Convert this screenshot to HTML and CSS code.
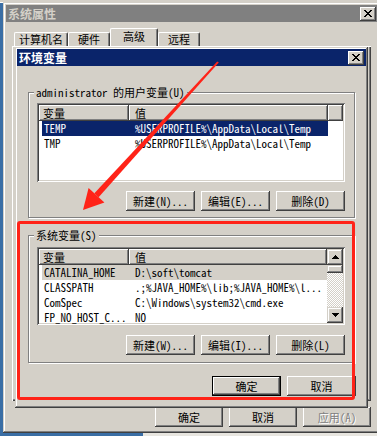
FILE: index.html
```html
<!DOCTYPE html>
<html lang="zh-CN">
<head>
<meta charset="utf-8">
<title>系统属性 - 环境变量</title>
<link rel="stylesheet" href="styles.css">
</head>
<body>
<div class="topstrip"></div>

<div class="outer">
  <div class="title inactive">
    <span class="ttext">系统属性</span>
    <span class="xbtn"><svg width="8" height="7" viewBox="0 0 8 7"><path d="M0 0h2v1h-2z M6 0h2v1h-2z M1 1h2v1h-2z M5 1h2v1h-2z M2 2h4v1h-4z M3 3h2v1h-2z M2 4h4v1h-4z M1 5h2v1h-2z M5 5h2v1h-2z M0 6h2v1h-2z M6 6h2v1h-2z" fill="#000"/></svg></span>
  </div>
  <div class="tabs">
    <div class="tab w1">计算机名</div>
    <div class="tab w2">硬件</div>
    <div class="tab sel w3">高级</div>
    <div class="tab w2">远程</div>
  </div>
  <div class="panel"></div>
  <div class="obtns">
    <div class="btn wo">确定</div>
    <div class="btn wo">取消</div>
    <div class="btn wo dis">应用(A)</div>
  </div>
</div>

<div class="dlg">
  <div class="title active">
    <span class="ttext">环境变量</span>
    <span class="xbtn"><svg width="8" height="7" viewBox="0 0 8 7"><path d="M0 0h2v1h-2z M6 0h2v1h-2z M1 1h2v1h-2z M5 1h2v1h-2z M2 2h4v1h-4z M3 3h2v1h-2z M2 4h4v1h-4z M1 5h2v1h-2z M5 5h2v1h-2z M0 6h2v1h-2z M6 6h2v1h-2z" fill="#000"/></svg></span>
  </div>

  <div class="group g-user">
    <div class="lbl">administrator 的用户变量(U)</div>
    <div class="list l-user">
      <div class="hdr">
        <div class="hc c1">变量</div>
        <div class="hc c2">值</div>
        <div class="hc fill"></div>
      </div>
      <div class="row sel"><div class="cell k">TEMP</div><div class="cell v">%USERPROFILE%\AppData\Local\Temp</div></div>
      <div class="row"><div class="cell k">TMP</div><div class="cell v">%USERPROFILE%\AppData\Local\Temp</div></div>
    </div>
    <div class="gbtns">
      <div class="btn wg">新建(N)...</div>
      <div class="btn wg">编辑(E)...</div>
      <div class="btn wg">删除(D)</div>
    </div>
  </div>

  <div class="group g-sys">
    <div class="lbl">系统变量(S)</div>
    <div class="list l-sys">
      <div class="lmain">
        <div class="hdr">
          <div class="hc c1">变量</div>
          <div class="hc c2 grow">值</div>
        </div>
        <div class="row inact"><div class="cell k">CATALINA_HOME</div><div class="cell v">D:\soft\tomcat</div></div>
        <div class="row"><div class="cell k">CLASSPATH</div><div class="cell v">.;%JAVA_HOME%\lib;%JAVA_HOME%\l...</div></div>
        <div class="row"><div class="cell k">ComSpec</div><div class="cell v">C:\Windows\system32\cmd.exe</div></div>
        <div class="row"><div class="cell k">FP_NO_HOST_C...</div><div class="cell v">NO</div></div>
      </div>
      <div class="sbar">
        <div class="sbtn"><svg width="7" height="4" viewBox="0 0 7 4"><path d="M3 0h1v1h-1z M2 1h3v1h-3z M1 2h5v1h-5z M0 3h7v1h-7z" fill="#000"/></svg></div>
        <div class="thumb"></div>
        <div class="track"></div>
        <div class="sbtn"><svg width="7" height="4" viewBox="0 0 7 4"><path d="M0 0h7v1h-7z M1 1h5v1h-5z M2 2h3v1h-3z M3 3h1v1h-1z" fill="#000"/></svg></div>
      </div>
    </div>
    <div class="gbtns">
      <div class="btn wg">新建(W)...</div>
      <div class="btn wg">编辑(I)...</div>
      <div class="btn wg">删除(L)</div>
    </div>
  </div>

  <div class="dbtns">
    <div class="btn wg def">确定</div>
    <div class="btn wg">取消</div>
  </div>
</div>

<div class="taskstrip"></div>
<div class="redbox"></div>
<svg class="arrow" width="377" height="436" viewBox="0 0 377 436">
  <polygon points="217.2,61.4 218.8,62.6 98.6,197.2 94.4,193.2" fill="#ff2318"/>
  <polygon points="83,210 88.6,188 104.4,202.4" fill="#ff2318"/>
</svg>
</body>
</html>
```
FILE: styles.css
```css
* { box-sizing: border-box; }
html, body { margin: 0; padding: 0; }
body {
  width: 377px; height: 436px; overflow: hidden; position: relative;
  background: #3a6ea5;
  font-family: "Noto Sans Mono CJK SC", "Liberation Mono", "Noto Sans CJK SC", monospace;
  font-size: 11px; color: #000;
}

.topstrip { position: absolute; left: 0; top: 0; width: 377px; height: 3px; background: #d4d0c8; box-shadow: inset 0 -1px #fff; }
.taskstrip { position: absolute; left: 143px; top: 433px; width: 234px; height: 3px; background: #e8e6e0; }

.outer {
  position: absolute; left: 3px; top: 2px; width: 378px; height: 431px;
  background: #d4d0c8; padding: 3px;
  display: flex; flex-direction: column;
  box-shadow: inset -1px -1px #404040, inset 1px 1px #d4d0c8, inset -2px -2px #808080, inset 2px 2px #fff;
}

.title { height: 17px; flex: none; display: flex; align-items: center; padding: 0 2px; font-weight: bold; font-size: 12px; font-family: "Noto Sans CJK SC", sans-serif; }
.title.inactive { background: #808080; color: #d4d0c8; }
.title.active { background: #0a246a; color: #fff; }
.ttext { line-height: 17px; }
.xbtn {
  margin-left: auto; width: 16px; height: 14px; background: #d4d0c8;
  display: flex; align-items: center; justify-content: center;
  box-shadow: inset -1px -1px #404040, inset 1px 1px #fff, inset -2px -2px #808080;
}
.xbtn svg { display: block; }

.tabs { display: flex; align-items: flex-end; height: 19px; margin: 5px 0 0 8px; flex: none; }
.tab {
  height: 14px; border-top: 1px solid #fff; border-left: 1px solid #fff; border-right: 1px solid #404040;
  border-radius: 2px 2px 0 0; box-shadow: inset -1px 0 #808080;
  text-align: center; line-height: 13px; font-size: 11px; font-family: "Noto Sans CJK SC", sans-serif;
}
.tab.sel { height: 18px; line-height: 15px; }
.w1 { width: 54px; }
.w2 { width: 42px; }
.w3 { width: 48px; }

.panel {
  margin-left: 6px; width: 359px; height: 355px; flex: none;
  box-shadow: inset 1px 1px #fff, inset -1px -1px #404040, inset -2px -2px #808080;
}

.obtns { margin: 6px 0 0 6px; width: 359px; display: flex; justify-content: flex-end; gap: 6px; }

.btn {
  height: 20px; background: #d4d0c8; display: flex; align-items: center; justify-content: center;
  box-shadow: inset -1px -1px #404040, inset 1px 1px #fff, inset -2px -2px #808080, inset 2px 2px #d4d0c8;
  font-size: 11px; line-height: 12px;
}
.wo { width: 68px; }
.wg { width: 69px; }
.btn.dis { color: #808080; text-shadow: 1px 1px #fff; }
.btn.def {
  box-shadow: inset 0 0 0 1px #000, inset -2px -2px #404040, inset 2px 2px #fff, inset -3px -3px #808080;
}

.dlg {
  position: absolute; left: 15px; top: 47px; width: 353px; height: 361px;
  background: #d4d0c8; padding: 2px;
  display: flex; flex-direction: column;
  box-shadow: inset -1px -1px #404040, inset 1px 1px #d4d0c8, inset -2px -2px #808080, inset 2px 2px #fff;
}

.group {
  position: relative; margin-left: 11px; width: 327px; flex: none;
  border: 1px solid #808080; box-shadow: inset 1px 1px #fff, 1px 1px #fff;
}
.g-user { margin-top: 26px; padding: 10px 9px 6px 8px; }
.g-sys { margin-top: 17px; padding: 11px 9px 7px 8px; }
.lbl { position: absolute; top: -7px; left: 5px; padding: 0 2px; background: #d4d0c8; line-height: 12px; white-space: nowrap; }

.list {
  background: #fff; padding: 2px;
  box-shadow: inset 1px 1px #808080, inset -1px -1px #fff, inset 2px 2px #404040, inset -2px -2px #d4d0c8;
}
.l-user { height: 79px; display: flex; flex-direction: column; }
.l-sys { height: 78px; display: flex; }
.lmain { flex: 1; display: flex; flex-direction: column; min-width: 0; }

.hdr { display: flex; height: 16px; flex: none; }
.hc {
  background: #d4d0c8; line-height: 16px; white-space: nowrap;
  box-shadow: inset -1px -1px #404040, inset 1px 1px #fff, inset -2px -2px #808080;
}
.hc.c1 { width: 90px; padding-left: 4px; }
.hc.c2 { width: 199px; padding-left: 6px; }
.hc.grow { flex: 1; width: auto; }
.hc.fill { flex: 1; }

.row { display: flex; height: 15px; line-height: 15px; margin-left: 3px; width: 286px; white-space: nowrap; }
.l-sys .row { width: 285px; }
.cell.k { width: 87px; padding-left: 2px; overflow: hidden; }
.cell.v { flex: 1; padding-left: 6px; overflow: hidden; }
.row.sel { background: #0a246a; color: #fff; }
.row.inact { background: #d4d0c8; }

.sbar { width: 16px; flex: none; display: flex; flex-direction: column; }
.sbtn {
  height: 16px; flex: none; background: #d4d0c8; display: flex; align-items: center; justify-content: center;
  box-shadow: inset -1px -1px #404040, inset 1px 1px #d4d0c8, inset -2px -2px #808080, inset 2px 2px #fff;
}
.sbtn svg { display: block; }
.thumb {
  height: 8px; flex: none; background: #d4d0c8;
  box-shadow: inset -1px -1px #404040, inset 1px 1px #d4d0c8, inset -2px -2px #808080, inset 2px 2px #fff;
}
.track { flex: 1; background: repeating-conic-gradient(#d4d0c8 0 25%, #fff 0 50%) 0 0 / 2px 2px; }

.gbtns { display: flex; justify-content: flex-end; gap: 6px; margin-top: 9px; }
.g-sys .gbtns { margin-top: 10px; }

.dbtns { display: flex; justify-content: flex-end; gap: 6px; margin: 13px 10px 0 0; }

.redbox {
  position: absolute; left: 17px; top: 221px; width: 338px; height: 179px;
  border: 3px solid #ff2318; border-radius: 3px; pointer-events: none;
}
.arrow { position: absolute; left: 0; top: 0; pointer-events: none; }
```
